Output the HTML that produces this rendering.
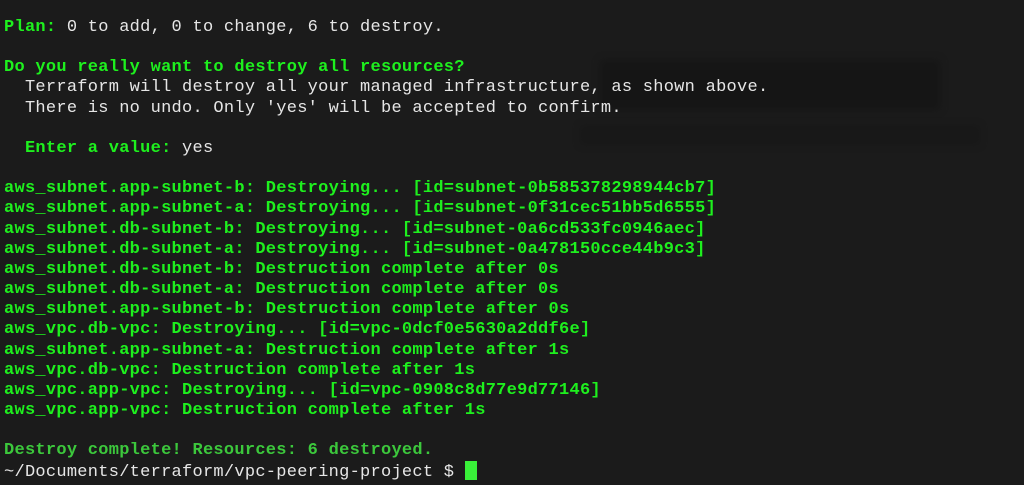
<!DOCTYPE html>
<html><head><style>
html,body{margin:0;padding:0;background:#1b1b1b;width:1024px;height:485px;overflow:hidden}
pre{margin:0;position:absolute;left:4px;top:18px;font-family:"Liberation Mono",monospace;font-size:17px;letter-spacing:0.27px;line-height:20.15px;color:#e6e6e6}
.g{color:#1ef01e;font-weight:bold}
.d{color:#3cc83c;font-weight:bold}
.cur{display:inline-block;width:12px;height:19px;background:#39f039;vertical-align:-4px}
.bg{position:absolute;background:#111;filter:blur(4px);opacity:.5}
</style></head><body>
<div class="bg" style="left:600px;top:60px;width:340px;height:50px"></div>
<div class="bg" style="left:580px;top:125px;width:400px;height:20px;opacity:.3"></div>
<pre><span class="g">Plan:</span> 0 to add, 0 to change, 6 to destroy.

<span class="g">Do you really want to destroy all resources?</span>
  Terraform will destroy all your managed infrastructure, as shown above.
  There is no undo. Only 'yes' will be accepted to confirm.

  <span class="g">Enter a value:</span> yes

<span class="g">aws_subnet.app-subnet-b: Destroying... [id=subnet-0b585378298944cb7]
aws_subnet.app-subnet-a: Destroying... [id=subnet-0f31cec51bb5d6555]
aws_subnet.db-subnet-b: Destroying... [id=subnet-0a6cd533fc0946aec]
aws_subnet.db-subnet-a: Destroying... [id=subnet-0a478150cce44b9c3]
aws_subnet.db-subnet-b: Destruction complete after 0s
aws_subnet.db-subnet-a: Destruction complete after 0s
aws_subnet.app-subnet-b: Destruction complete after 0s
aws_vpc.db-vpc: Destroying... [id=vpc-0dcf0e5630a2ddf6e]
aws_subnet.app-subnet-a: Destruction complete after 1s
aws_vpc.db-vpc: Destruction complete after 1s
aws_vpc.app-vpc: Destroying... [id=vpc-0908c8d77e9d77146]
aws_vpc.app-vpc: Destruction complete after 1s</span>

<span class="d">Destroy complete! Resources: 6 destroyed.</span>
~/Documents/terraform/vpc-peering-project $ <span class="cur"></span></pre>
</body></html>
